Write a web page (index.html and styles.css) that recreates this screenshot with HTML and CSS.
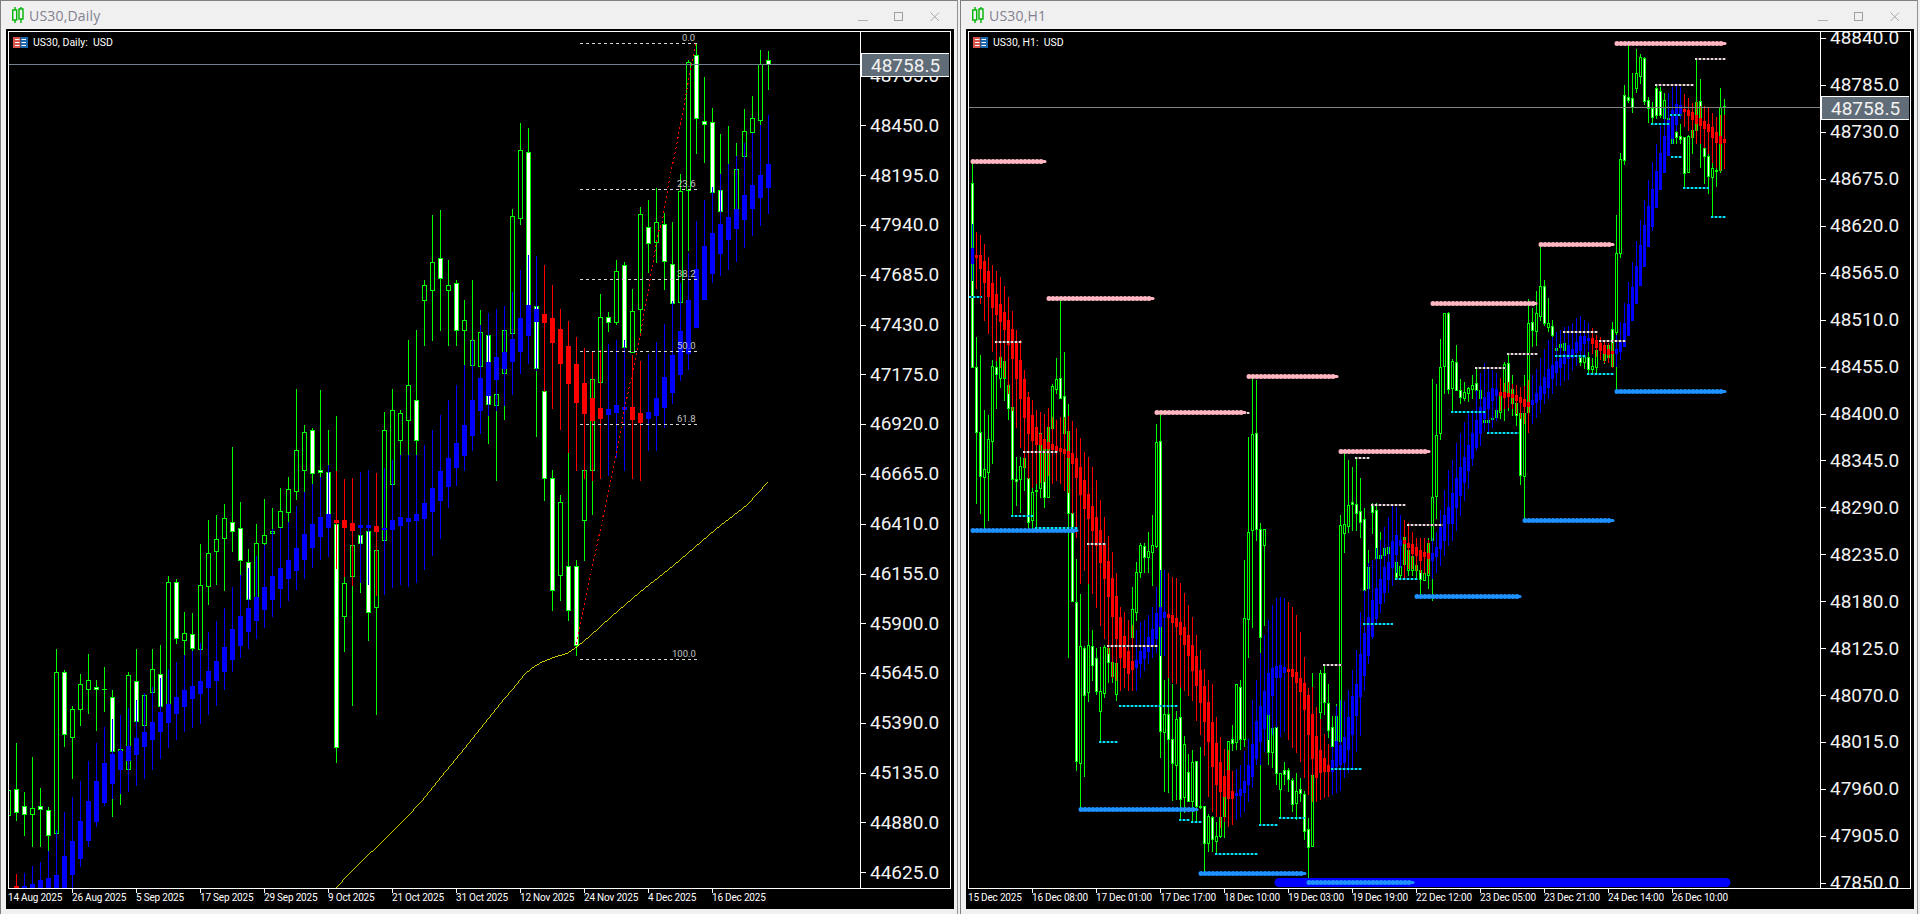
FILE: index.html
```html
<!DOCTYPE html>
<html lang="en">
<head>
<meta charset="utf-8">
<title>US30 charts</title>
<link rel="stylesheet" href="styles.css">
</head>
<body>
<main class="desktop">
  <section class="window">
    <header class="titlebar">
      <svg class="app-icon" viewBox="0 0 12 16"><path d="M3 0v3M3 13v3M9 0v2M9 12v4" stroke="#00b400" stroke-width="1.4" fill="none"/><rect x=".7" y="3" width="4" height="10" fill="none" stroke="#00b400" stroke-width="1.4"/><rect x="7" y="2" width="4" height="10" fill="none" stroke="#00b400" stroke-width="1.4"/></svg>
      <span class="title">US30,Daily</span>
      <div class="controls">
        <svg viewBox="0 0 10 10"><path d="M0 8.5h10" stroke="#b0b0b0" fill="none"/></svg>
        <svg viewBox="0 0 10 10"><rect x=".5" y=".5" width="8" height="8" stroke="#a0a0a0" fill="none"/></svg>
        <svg viewBox="0 0 10 10"><path d="M.5 .5l8.5 8.5M9 .5L.5 9" stroke="#a8a8a8" fill="none"/></svg>
      </div>
    </header>
    <div class="chart-frame">
      <svg class="chart" id="chart-daily" viewBox="6 29 948 880" width="948" height="880"></svg>
      <div class="legend">
        <svg class="flag" viewBox="0 0 15 11"><rect width="7.5" height="11" fill="#d9534a"/><rect x="7.5" width="7.5" height="11" fill="#1b66ad"/><path d="M2 2.5h4.5M2 5.5h4.5M2 8.5h4.5M8.5 2.5h4.5M8.5 5.5h4.5M8.5 8.5h4.5" stroke="#fff"/></svg>
        <span>US30, Daily:&nbsp; USD</span>
      </div>
    </div>
  </section>
  <section class="window">
    <header class="titlebar">
      <svg class="app-icon" viewBox="0 0 12 16"><path d="M3 0v3M3 13v3M9 0v2M9 12v4" stroke="#00b400" stroke-width="1.4" fill="none"/><rect x=".7" y="3" width="4" height="10" fill="none" stroke="#00b400" stroke-width="1.4"/><rect x="7" y="2" width="4" height="10" fill="none" stroke="#00b400" stroke-width="1.4"/></svg>
      <span class="title">US30,H1</span>
      <div class="controls">
        <svg viewBox="0 0 10 10"><path d="M0 8.5h10" stroke="#b0b0b0" fill="none"/></svg>
        <svg viewBox="0 0 10 10"><rect x=".5" y=".5" width="8" height="8" stroke="#a0a0a0" fill="none"/></svg>
        <svg viewBox="0 0 10 10"><path d="M.5 .5l8.5 8.5M9 .5L.5 9" stroke="#a8a8a8" fill="none"/></svg>
      </div>
    </header>
    <div class="chart-frame">
      <svg class="chart" id="chart-h1" viewBox="6 29 948 880" width="948" height="880"></svg>
      <div class="legend">
        <svg class="flag" viewBox="0 0 15 11"><rect width="7.5" height="11" fill="#d9534a"/><rect x="7.5" width="7.5" height="11" fill="#1b66ad"/><path d="M2 2.5h4.5M2 5.5h4.5M2 8.5h4.5M8.5 2.5h4.5M8.5 5.5h4.5M8.5 8.5h4.5" stroke="#fff"/></svg>
        <span>US30, H1:&nbsp; USD</span>
      </div>
    </div>
  </section>
</main>
<script src="chart.js"></script>
</body>
</html>
```
FILE: styles.css
```css
html, body { margin: 0; height: 100%; background: #f0f0f0; overflow: hidden; }
.desktop { display: flex; gap: 2px; width: 1920px; height: 914px; }
.window {
  width: 958px; height: 914px; box-sizing: border-box;
  border-top: 1px solid #808080; border-left: 1px solid #808080; border-right: 1px solid #909090;
  background: #f0f0f0; display: flex; flex-direction: column;
}
.titlebar { height: 28px; display: flex; align-items: center; padding: 0 17px 0 11px; box-sizing: border-box; }
.app-icon { width: 12px; height: 16px; margin-right: 5px; }
.title { font: 14px "Open Sans", sans-serif; color: #828090; letter-spacing: .2px; }
.controls { margin-left: auto; margin-top: 4px; display: flex; gap: 26px; align-items: center; }
.controls svg { width: 10px; height: 10px; display: block; }
.chart-frame { position: relative; width: 948px; height: 880px; margin-left: 5px; background: #000; }
.chart { display: block; }
.legend {
  position: absolute; left: 7px; top: 7px; display: flex; align-items: center; gap: 5px;
  font: 10.5px Roboto, sans-serif; color: #fff;
}
.flag { width: 15px; height: 11px; }
.axis-price { font: 19px Roboto, sans-serif; fill: #f2f2f2; }
.axis-time { font: 10px Roboto, sans-serif; fill: #fff; letter-spacing: -.2px; }
.fib-label { font: 9.5px Roboto, sans-serif; fill: #c4c4c4; }
```
FILE: chart.js
```js
(function () {
  var GREEN = '#00ff00', BLUE = '#0000ff', RED = '#ff0000';
  function r(x, y, w, h, c) { return h > 0 ? '<rect x="' + x + '" y="' + y + '" width="' + w + '" height="' + h + '" fill="' + c + '"/>' : ''; }
  function candle(x, c, half) {
    var hi = c[0], bt = c[1], bb = c[2], lo = c[3], w = c[4], s = '';
    s += r(x, hi, 1, lo - hi + 1, GREEN);
    s += r(x - half, bt, 2 * half + 1, bb - bt + 1, GREEN);
    s += r(x - half + 1, bt + 1, 2 * half - 1, bb - bt - 1, w ? '#fff' : '#000');
    return s;
  }
  function ha(x, c, half, col) {
    return r(x, c[2], 1, c[3] - c[2] + 1, col) + r(x - half, c[0], 2 * half + 1, c[1] - c[0] + 1, col);
  }
  function frame(priceY, linecol, tag, prices, dates) {
    var s = '<g clip-path="url(#axis)">';
    prices.forEach(function (p) {
      s += r(861, Math.round(p[1]), 5, 1, '#fff');
      s += '<text class="axis-price" x="870" y="' + Math.round(p[1] + 6.4) + '">' + p[0] + '</text>';
    });
    s += '</g>';
    s += r(9, priceY, 851, 1, linecol);
    s += r(861, tag, 88, 24, '#606c78') + r(861, tag, 88, 1, '#fff') + r(861, tag + 23, 88, 1, '#fff') + r(861, tag, 1, 24, '#fff');
    s += '<text class="axis-price" x="871" y="' + (tag + 19) + '" fill="#fff">48758.5</text>';
    s += '<rect x="8.5" y="31.5" width="942" height="857" fill="none" stroke="#fff"/>' + r(860, 32, 1, 856, '#fff');
    dates.forEach(function (d, i) {
      var x = 8 + 64 * i;
      if (i) s += r(x, 889, 1, 4, '#fff');
      s += '<text class="axis-time" x="' + x + '" y="901">' + d + '</text>';
    });
    return s;
  }
  var defs = '<defs><clipPath id="plotCLIP"><rect x="9" y="32" width="851" height="856"/></clipPath><clipPath id="axis"><rect x="861" y="32" width="89" height="856"/></clipPath></defs>';

  /* ---------- Daily ---------- */
  var dG = [[8,770,790,815,830,0],[16,743,789,812,820,1],[24,792,806,814,835,1],[32,757,808,814,846,0],[40,788,806,809,846,1],[48,807,810,835,851,1],[56,649,672,833,833,0],[64,670,672,734,746,1],[72,706,709,737,778,0],[80,674,684,709,725,0],[88,654,680,689,713,0],[96,680,687,689,730,1],[104,667,689,689,711,1],[112,690,697,751,816,1],[120,746,749,751,804,0],[128,672,675,769,769,0],[136,649,681,721,721,1],[144,693,695,725,725,0],[152,649,669,692,705,0],[160,645,674,706,706,1],[168,576,582,704,705,0],[176,579,582,638,643,1],[184,612,633,640,654,0],[192,613,634,648,652,1],[200,544,585,649,649,0],[208,520,553,586,604,0],[216,515,539,551,584,0],[224,504,518,538,590,0],[232,447,522,531,551,1],[240,502,528,560,575,1],[248,549,562,599,599,1],[256,524,543,600,600,0],[264,499,535,543,545,0],[272,508,531,533,535,0],[280,488,511,527,528,0],[288,477,489,512,522,0],[296,389,450,491,499,0],[304,425,432,470,492,0],[312,428,430,473,484,1],[320,390,470,472,477,1],[328,430,472,514,520,1],[336,416,524,747,762,1],[344,576,583,616,651,0],[352,530,545,576,705,0],[360,500,535,543,592,1],[368,500,531,612,640,1],[376,520,550,607,714,0],[384,412,430,540,540,0],[392,389,410,484,514,0],[400,410,413,440,490,0],[408,340,385,420,470,0],[416,330,400,440,460,1],[424,280,285,300,345,0],[432,215,262,290,340,0],[440,210,258,278,330,1],[448,260,285,290,345,0],[456,280,283,330,345,1],[464,300,320,330,375,0],[472,280,340,365,380,0],[480,310,332,366,380,0],[488,320,335,404,443,1],[496,390,394,405,480,0],[504,320,330,373,419,0],[512,209,216,333,333,0],[520,123,150,218,224,0],[528,128,152,320,320,1],[536,306,306,368,436,1],[544,386,391,478,500,1],[552,470,478,590,610,1],[560,495,502,575,600,0],[568,452,566,610,620,1],[576,560,566,645,655,1],[584,460,470,520,560,0],[592,379,379,470,514,0],[600,294,317,382,382,0],[608,312,317,322,331,1],[616,260,271,322,324,0],[624,262,265,347,347,1],[632,289,311,352,352,0],[640,207,214,309,335,0],[648,200,227,243,272,1],[656,188,222,242,262,0],[664,213,224,261,289,1],[672,222,264,303,303,1],[680,174,191,302,302,0],[688,60,62,190,250,0],[696,44,55,118,153,1],[704,77,121,124,162,1],[712,108,122,192,192,1],[720,134,190,211,211,1],[728,126,218,222,225,0],[736,143,169,210,210,0],[744,109,131,156,156,0],[752,96,118,132,133,0],[760,50,64,120,125,0],[768,51,60,64,89,1]];
  /* x: [bodyTop, bodyBottom, high, low] */
  var dH = {16:[886,888,874,888],24:[886,888,873,888],32:[884,888,866,888],40:[880,888,862,888],48:[878,888,851,888],56:[875,888,830,888],64:[856,888,812,888],72:[841,874,797,887],80:[821,858,781,866],88:[801,840,761,846],96:[781,821,743,826],104:[763,802,727,805],112:[754,783,719,798],120:[751,769,715,793],128:[746,760,708,791],136:[738,754,700,785],144:[732,746,693,778],152:[722,739,687,769],160:[712,731,678,758],168:[704,722,669,747],176:[697,713,662,739],184:[690,706,655,731],192:[686,698,651,727],200:[681,693,643,723],208:[671,687,632,714],216:[661,680,621,705],224:[647,671,608,689],232:[629,659,587,671],240:[616,645,575,657],248:[608,631,568,648],256:[597,620,556,638],264:[587,609,545,627],272:[576,599,529,616],280:[568,588,528,607],288:[560,578,522,600],296:[548,570,506,589],304:[534,559,492,578],312:[524,547,484,567],320:[517,536,477,559],328:[514,527,465,556],336:[520,522,471,568],344:[520,527,479,576],352:[523,530,478,585],360:[525,527,472,582],368:[525,527,470,584],376:[526,531,473,595],384:[528,529,468,594],392:[520,529,460,587],400:[517,525,455,584],408:[518,521,455,586],416:[514,520,455,582],424:[503,518,445,569],432:[488,511,430,555],440:[471,500,415,538],448:[458,486,400,507],456:[443,467,385,485],464:[425,455,365,470],472:[400,435,340,450],480:[378,410,325,433],488:[362,395,313,415],496:[357,379,309,410],504:[352,368,306,405],512:[339,361,292,394],520:[318,351,270,373],528:[305,335,255,363],536:[309,321,256,370],544:[314,322,265,391],552:[318,342,285,408],560:[329,363,309,429],568:[346,383,321,452],576:[364,402,337,470],584:[383,413,348,478],592:[398,420,352,480],600:[408,418,350,478],608:[409,414,344,475],616:[405,412,340,457],624:[407,409,340,470],632:[407,419,355,478],640:[413,422,361,480],648:[412,418,354,450],656:[398,415,342,450],664:[377,407,324,427],672:[355,392,301,403],680:[331,374,283,380],688:[300,353,253,369],696:[269,327,221,327],704:[246,299,200,299],712:[233,273,187,282],720:[224,253,174,275],728:[217,239,164,269],736:[209,228,156,261],744:[195,219,143,247],752:[185,208,133,235],760:[175,197,125,225],768:[164,187,115,213]};
  var dRed = {16:1,336:1,344:1,352:1,376:1,544:1,552:1,560:1,568:1,576:1,584:1,592:1,600:1,632:1,640:1};
  var s = defs + '<g clip-path="url(#plotCLIP)" shape-rendering="crispEdges">';
  dG.forEach(function (c) { s += candle(c[0], c.slice(1), 2); });
  Object.keys(dH).forEach(function (k) { s += ha(+k, dH[k], 2, dRed[k] ? RED : BLUE); });
  s += '</g>';
  s += '<polyline clip-path="url(#plotCLIP)" shape-rendering="crispEdges" fill="none" stroke="#ffff00" stroke-width=".8" points="330,892 336,888 348,875 364,859 380,844 405,819 422,801 437,782 460,754 480,729 500,704 517,684 524,675 532,668 542,662 555,657 568,653 578,646 590,636 612,616 640,592 673,566 716,529 747,505 768,482"/>';
  [[43,'0.0',682],[189,'23.6',677],[279,'38.2',677],[351,'50.0',677],[424,'61.8',677],[659,'100.0',672]].forEach(function (f) {
    s += '<line x1="580" x2="697" y1="' + (f[0] + .5) + '" y2="' + (f[0] + .5) + '" stroke="#d8d8d8" stroke-dasharray="3 3" shape-rendering="crispEdges"/>';
    s += '<text class="fib-label" x="' + f[2] + '" y="' + (f[0] - 2) + '">' + f[1] + '</text>';
  });
  s += '<polyline fill="none" stroke="#ff0000" stroke-dasharray="2 3" shape-rendering="crispEdges" points="696,44 693,57 683,110 677,143 668,187 662,223 658,233 650,280 643,320 637,353 630,383 623,417 617,450 576,645"/>';
  var p = [];
  for (var i = -1; i < 16; i++) p.push([(48450 - 255 * i) + '.0', 125.3 + 49.8 * i]);
  s += frame(64, '#708090', 53, p, ['14 Aug 2025', '26 Aug 2025', '5 Sep 2025', '17 Sep 2025', '29 Sep 2025', '9 Oct 2025', '21 Oct 2025', '31 Oct 2025', '12 Nov 2025', '24 Nov 2025', '4 Dec 2025', '16 Dec 2025']);
  document.getElementById('chart-daily').innerHTML = s;

  /* ---------- H1 ---------- */
  var hG = [[3,163,183,367,367,1],[4,337,367,432,503,1],[5,355,432,476,513,1],[6,410,469,477,528,0],[7,415,439,472,520,0],[8,360,366,441,463,0],[9,359,367,374,408,1],[10,357,357,378,387,0],[11,360,361,378,400,0],[12,377,385,408,419,1],[13,406,407,479,515,1],[14,457,479,481,505,1],[15,457,466,479,512,0],[16,458,458,467,490,0],[17,458,478,522,530,1],[18,432,492,520,528,0],[19,484,490,491,527,1],[20,432,433,488,497,0],[21,427,443,497,507,1],[22,408,427,497,497,0],[23,384,386,428,443,0],[24,358,379,389,393,0],[25,301,378,398,398,1],[26,352,396,433,447,1],[27,404,431,513,657,1],[28,490,513,601,601,1],[29,559,602,761,770,1],[30,594,646,763,807,0],[31,646,648,695,776,1],[32,583,645,692,701,0],[33,630,646,665,680,1],[34,648,658,691,694,1],[35,647,691,711,741,0],[36,645,647,693,697,0],[37,647,648,662,682,1],[38,660,662,676,682,0],[39,660,663,694,700,0],[43,587,609,637,660,0],[44,562,572,612,620,0],[45,543,545,572,577,0],[46,543,546,557,572,1],[47,532,551,557,572,0],[48,515,545,552,585,0],[49,424,442,546,547,0],[50,415,441,731,757,1],[51,680,714,732,791,0],[52,673,714,739,792,1],[53,684,739,763,800,1],[54,711,719,765,799,0],[55,684,717,799,819,1],[56,736,744,797,812,0],[57,754,772,801,801,1],[58,750,762,801,821,0],[59,761,761,806,821,1],[60,747,806,807,808,1],[61,806,806,843,872,1],[62,814,816,843,851,0],[63,816,817,839,851,1],[64,822,836,841,852,0],[65,799,817,836,837,0],[66,795,796,816,837,0],[67,741,741,797,800,0],[68,725,739,743,750,1],[69,684,684,742,749,0],[70,680,687,739,749,1],[71,560,618,739,746,0],[72,437,532,619,657,0],[73,378,434,530,627,0],[74,380,433,529,540,1],[75,523,529,637,824,1],[76,529,529,545,625,0],[77,642,708,752,764,1],[78,700,728,752,767,0],[79,727,727,773,784,1],[80,773,773,789,817,0],[81,762,770,774,784,1],[82,768,770,779,791,1],[83,778,780,804,811,1],[84,773,791,803,819,0],[85,778,789,793,801,1],[86,791,794,831,839,1],[87,818,829,847,877,1],[88,673,775,846,846,0],[89,729,736,777,777,0],[90,670,673,712,727,0],[91,664,673,702,714,1],[92,684,703,730,737,1],[93,716,727,746,761,1],[94,704,716,740,761,0],[95,515,525,741,741,0],[96,453,524,533,552,0],[97,460,505,526,532,0],[98,467,502,504,530,1],[99,457,504,513,530,1],[100,478,511,522,537,1],[101,508,519,590,590,1],[102,550,567,588,590,0],[103,503,504,512,533,1],[104,503,510,558,558,1],[105,532,555,558,558,1],[106,548,548,555,560,0],[107,547,547,553,556,0],[108,550,552,556,560,0],[109,562,562,577,578,1],[110,561,566,575,578,0],[111,537,537,564,567,0],[112,545,550,570,575,0],[113,555,556,570,575,0],[114,560,565,570,578,0],[115,555,570,579,597,1],[116,570,573,580,580,0],[117,538,543,575,588,0],[118,379,497,540,600,0],[119,384,435,496,518,0],[120,339,367,433,439,0],[121,313,313,366,393,0],[122,312,313,389,393,1],[123,359,361,388,412,0],[124,345,362,390,390,1],[125,379,390,397,403,1],[126,382,392,398,400,0],[127,387,388,393,401,0],[128,375,385,389,398,0],[129,367,383,390,390,1],[130,390,390,398,403,1],[131,418,420,422,424,0],[132,418,420,422,424,0],[133,416,418,419,424,0],[134,407,410,417,419,0],[135,394,396,412,418,0],[136,362,364,396,420,0],[137,354,363,392,410,1],[138,375,389,403,415,0],[139,389,403,415,425,1],[140,410,413,475,484,1],[141,375,413,476,518,0],[142,299,323,412,412,0],[143,308,322,330,346,1],[144,291,313,331,345,0],[145,247,286,316,320,0],[146,280,286,323,325,1],[147,298,323,327,331,0],[148,320,326,335,343,1],[149,346,348,350,352,0],[150,342,344,347,349,0],[151,341,343,350,352,0],[152,348,350,353,355,0],[155,350,355,362,365,1],[156,350,356,362,368,0],[157,352,357,369,372,1],[158,358,366,369,372,0],[159,345,350,367,372,0],[161,343,345,360,363,0],[162,345,345,357,360,0],[163,322,329,366,367,1],[164,215,253,332,390,0],[165,153,159,253,257,0],[166,85,95,160,164,1],[167,45,97,100,102,1],[168,73,98,107,112,1],[169,49,73,88,92,0],[170,54,57,76,83,0],[171,57,58,101,104,1],[172,97,100,108,122,1],[173,102,108,117,123,1],[174,86,88,115,118,1],[175,87,91,115,117,1],[176,93,100,118,143,0],[177,110,118,121,143,0],[178,115,115,143,143,0],[179,123,132,137,143,1],[180,124,136,139,143,1],[181,137,137,173,187,1],[182,135,136,172,172,0],[183,125,130,137,153,0],[184,58,102,130,143,0],[185,79,101,122,167,1],[186,107,148,156,183,1],[187,148,156,176,193,1],[188,161,168,177,216,0],[189,165,170,171,186,1],[190,88,107,170,172,0],[191,99,106,107,141,1]];
  var hH = {3:[248,263,224,280],4:[255,257,232,288],5:[255,268,235,303],6:[261,282,244,320],7:[271,296,257,333],8:[283,307,265,351],9:[294,314,271,360],10:[304,321,277,367],11:[312,329,286,377],12:[320,344,297,393],13:[329,358,311,410],14:[343,378,330,427],15:[360,398,340,447],16:[379,417,370,467],17:[397,433,392,478],18:[415,440,400,487],19:[427,444,410,483],20:[434,444,412,482],21:[439,448,414,481],22:[442,448,408,475],23:[444,449,417,483],24:[446,450,420,480],25:[448,451,417,483],26:[449,453,417,490],27:[451,457,416,492],28:[453,463,421,513],29:[458,477,428,537],30:[467,494,438,583],31:[480,508,452,570],32:[494,518,457,583],33:[506,530,467,593],34:[517,545,480,607],35:[530,562,500,625],36:[545,578,517,638],37:[561,596,536,653],38:[578,616,552,677],39:[596,638,573,680],40:[617,657,607,690],41:[636,667,612,687],42:[651,673,620,690],43:[661,669,625,690],44:[660,667,630,690],45:[651,663,622,677],46:[645,658,620,670],47:[637,651,615,663],48:[629,645,607,657],49:[613,638,587,652],50:[607,626,570,655],51:[612,617,570,655],52:[614,617,573,677],53:[615,622,577,682],54:[618,626,578,683],55:[622,634,583,687],56:[627,644,593,690],57:[635,655,605,695],58:[645,670,617,700],59:[656,685,635,720],60:[670,702,650,734],61:[686,721,669,755],62:[702,741,680,796],63:[722,766,684,811],64:[743,784,717,816],65:[762,791,737,827],66:[776,796,749,821],67:[770,798,750,826],68:[791,798,771,824],69:[793,795,769,819],70:[789,795,765,816],71:[781,792,751,811],72:[765,784,739,801],73:[744,776,700,787],74:[721,758,680,764],75:[706,741,653,764],76:[691,728,635,751],77:[673,714,620,739],78:[668,695,605,734],79:[666,677,598,727],80:[665,677,597,736],81:[667,672,598,731],82:[669,671,602,739],83:[669,676,607,747],84:[672,682,615,752],85:[678,691,632,761],86:[683,709,657,777],87:[695,734,688,794],88:[714,758,687,801],89:[736,777,707,801],90:[750,772,719,799],91:[758,771,734,797],92:[765,771,744,796],93:[760,771,747,794],94:[741,766,706,792],95:[745,764,700,790],96:[737,762,701,777],97:[717,749,690,772],98:[696,734,670,769],99:[684,715,650,751],100:[654,696,612,735],101:[633,675,590,690],102:[617,655,563,663],103:[600,636,560,638],104:[588,618,548,623],105:[579,603,540,612],106:[567,592,527,602],107:[562,579,517,592],108:[541,567,505,585],109:[535,554,507,572],110:[540,545,515,567],111:[540,543,520,577],112:[543,547,523,568],113:[544,553,532,568],114:[547,555,538,570],115:[550,560,538,572],116:[552,556,538,573],117:[553,558,540,573],118:[553,560,538,578],119:[547,556,532,572],120:[527,548,510,565],121:[515,540,490,555],122:[507,523,470,545],123:[493,523,460,540],124:[478,507,443,530],125:[467,495,433,515],126:[457,482,422,500],127:[445,470,412,488],128:[433,458,410,465],129:[420,447,390,450],130:[407,433,373,445],131:[397,418,363,430],132:[392,408,368,433],133:[388,400,370,427],134:[389,395,373,420],135:[392,395,378,410],136:[392,397,383,408],137:[393,396,382,407],138:[394,397,384,408],139:[395,400,385,413],140:[397,402,387,418],141:[399,406,386,423],142:[402,406,380,432],143:[400,404,375,423],144:[393,402,369,417],145:[386,399,358,412],146:[377,393,349,403],147:[369,387,340,398],148:[365,378,337,393],149:[361,372,332,385],150:[358,367,330,385],151:[354,363,327,380],152:[345,358,326,379],153:[349,357,323,370],154:[342,352,318,365],155:[336,350,316,357],156:[336,343,320,357],157:[338,340,323,350],158:[338,343,328,353],159:[340,347,335,356],160:[343,350,337,359],161:[345,353,342,362],162:[349,354,343,362],163:[351,353,343,367],164:[349,353,335,366],165:[341,351,322,359],166:[323,346,303,346],167:[304,335,282,335],168:[287,320,262,320],169:[266,303,241,303],170:[245,285,220,285],171:[225,266,200,266],172:[206,246,180,246],173:[189,226,162,230],174:[171,207,144,207],175:[153,189,126,189],176:[136,172,108,172],177:[120,155,93,155],178:[110,138,87,143],179:[104,124,85,130],180:[105,115,87,118],181:[109,111,94,126],182:[110,115,98,130],183:[112,119,103,137],184:[115,123,102,143],185:[118,125,106,143],186:[121,128,106,147],187:[124,131,107,153],188:[127,137,113,162],189:[132,142,117,167],190:[136,143,115,170],191:[139,142,115,168]};
  function hRed(k) { return (k >= 4 && k <= 43) || (k >= 52 && k <= 68) || (k >= 82 && k <= 92) || (k >= 111 && k <= 117) || (k >= 135 && k <= 142) || (k >= 158 && k <= 163) || (k >= 181); }
  s = defs + '<g clip-path="url(#plotCLIP)" shape-rendering="crispEdges">';
  hG.forEach(function (c) { s += candle(4 * c[0], c.slice(1), 1); });
  Object.keys(hH).forEach(function (k) { s += ha(4 * k, hH[k], 1, hRed(+k) ? RED : BLUE); });
  s += '</g>';
  function seg(x1, x2, y, col, w, dash, cap) {
    return '<line x1="' + x1 + '" x2="' + x2 + '" y1="' + y + '" y2="' + y + '" stroke="' + col + '" stroke-width="' + w + '" stroke-dasharray="' + dash + '" stroke-linecap="' + cap + '"/>';
  }
  function thick(a, col) {
    return seg(a[0] + 2, a[1] - 2, a[2] + .5, col, 3, 'none', 'round') + seg(a[0] + 2, a[1] - 2, a[2] + .5, col, 5, '0 4', 'round');
  }
  s += seg(319, 766, 882.5, '#0000ff', 9, 'none', 'round');
  /* local coordinates: page x - 960 */
  [[11,87,161],[87,195,298],[195,287,412],[287,379,376],[379,471,451],[471,578,303],[579,655,244],[655,767,43]].forEach(function (a) { s += thick(a, '#ffb6c1'); });
  [[11,119,530],[119,239,809],[239,347,873],[347,455,882],[455,562,596],[563,655,520],[655,767,391]].forEach(function (a) { s += thick(a, '#1e90ff'); });
  [[35,62,341],[63,98,451],[127,146,543],[147,198,645],[287,290,412],[395,410,457],[411,446,504],[447,483,524],[363,382,664],[515,546,367],[547,578,353],[603,638,331],[639,666,340],[695,734,84],[735,766,58]].forEach(function (a) {
    s += seg(a[0], a[1], a[2] + 1, '#5a4c4e', 2, 'none', 'butt') + seg(a[0], a[1], a[2] + 1, '#e8dcdc', 2, '2 2', 'butt');
  });
  [[9,22,296],[51,73,515],[75,118,527],[403,433,623],[435,458,578],[139,158,741],[159,218,705],[219,230,819],[231,242,821],[255,298,853],[299,318,824],[319,345,817],[371,402,768],[491,526,411],[527,559,432],[595,626,355],[627,654,373],[691,710,123],[711,722,156],[723,749,187],[751,766,216],[710,722,114]].forEach(function (a) {
    s += seg(a[0], a[1], a[2] + 1, '#005a64', 2, 'none', 'butt') + seg(a[0], a[1], a[2] + 1, '#00e0ff', 2, '2 2', 'butt');
  });
  p = [];
  for (i = 0; i < 19; i++) p.push([(48840 - 55 * i) + '.0', 38 + 46.94 * i]);
  s += frame(107, '#808080', 96, p, ['15 Dec 2025', '16 Dec 08:00', '17 Dec 01:00', '17 Dec 17:00', '18 Dec 10:00', '19 Dec 03:00', '19 Dec 19:00', '22 Dec 12:00', '23 Dec 05:00', '23 Dec 21:00', '24 Dec 14:00', '26 Dec 10:00']);
  document.getElementById('chart-h1').innerHTML = s;
})();
```
